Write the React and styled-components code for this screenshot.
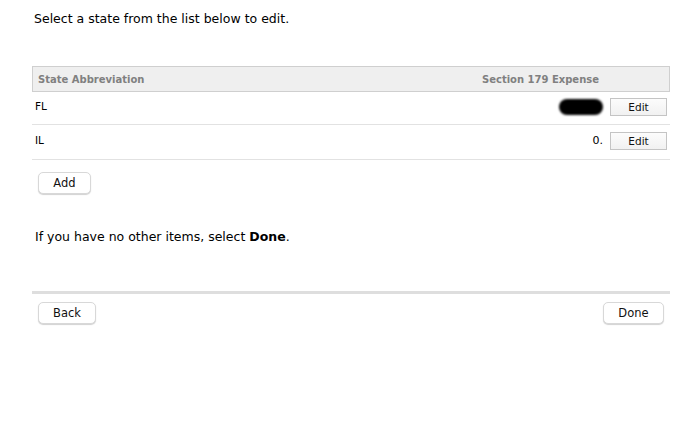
import styled, { createGlobalStyle } from "styled-components"

const Global = createGlobalStyle`
  body {
    margin: 0;
    background: #fff;
    font-family: "DejaVu Sans", "Open Sans", sans-serif;
    color: #000;
  }
`

const rows = [
  { state: "FL", amount: null, height: 33 },
  { state: "IL", amount: "0.", height: 35 },
]

const App = () => {
  return (
    <Page>
      <Global />
      <Intro>Select a state from the list below to edit.</Intro>
      <Table>
        <Header>
          <HeadCell>State Abbreviation</HeadCell>
          <HeadCell right>Section 179 Expense</HeadCell>
        </Header>
        {rows.map((r) => (
          <Row key={r.state} height={r.height}>
            <StateCell>{r.state}</StateCell>
            <AmountCell>
              {r.amount === null ? <Redacted /> : <Amount>{r.amount}</Amount>}
              <EditButton>Edit</EditButton>
            </AmountCell>
          </Row>
        ))}
      </Table>
      <AddWrap>
        <RoundButton width={53}>Add</RoundButton>
      </AddWrap>
      <Note>
        If you have no other items, select <b>Done</b>.
      </Note>
      <Footer>
        <RoundButton width={58}>Back</RoundButton>
        <RoundButton width={61}>Done</RoundButton>
      </Footer>
    </Page>
  )
}

const Page = styled.div`
  width: 693px;
  height: 435px;
  padding: 10px 23px 0 32px;
  box-sizing: border-box;
`

const Intro = styled.p`
  margin: 0 0 0 2px;
  font-size: 12.5px;
  line-height: 18px;
`

const Table = styled.div`
  margin-top: 38px;
  width: 638px;
`

const Header = styled.div`
  height: 26px;
  display: flex;
  align-items: center;
  justify-content: space-between;
  background: #efefef;
  border: 1px solid #cfcfcf;
  box-sizing: border-box;
  padding: 0 70px 0 5px;
`

const HeadCell = styled.span`
  font-size: 10px;
  font-weight: bold;
  color: #808080;
  text-align: ${(p) => (p.right ? "right" : "left")};
`

const Row = styled.div`
  height: ${(p) => p.height}px;
  box-sizing: border-box;
  display: flex;
  align-items: center;
  justify-content: space-between;
  border-bottom: 1px solid #e2e2e2;
  padding: 0 3px;
`

const StateCell = styled.span`
  font-size: 10.5px;
  margin-top: -4px;
`

const AmountCell = styled.div`
  display: flex;
  align-items: center;
  gap: 7px;
  margin-top: -3px;
`

const Amount = styled.span`
  font-size: 11px;
`

const Redacted = styled.span`
  display: block;
  width: 44px;
  height: 16px;
  background: #000;
  border-radius: 9px;
  filter: blur(1px);
`

const EditButton = styled.button`
  width: 57px;
  height: 18px;
  border: 1px solid #c4c4c4;
  background: linear-gradient(#fcfcfc, #f1f1f1);
  font-family: "DejaVu Sans", sans-serif;
  font-size: 10.5px;
  color: #111;
  padding: 0;
`

const AddWrap = styled.div`
  margin: 12px 0 0 6px;
`

const RoundButton = styled.button`
  width: ${(p) => p.width}px;
  height: 22px;
  border: 1px solid #d8d8d8;
  border-radius: 5px;
  background: #fff;
  box-shadow: 0 1px 1px rgba(0, 0, 0, 0.18);
  font-family: "DejaVu Sans", sans-serif;
  font-size: 11.5px;
  color: #111;
  padding: 0;
`

const Note = styled.p`
  margin: 34px 0 0 3px;
  font-size: 12.5px;
  line-height: 18px;
  b {
    font-weight: bold;
  }
`

const Footer = styled.div`
  margin-top: 45px;
  width: 638px;
  border-top: 3px solid #dedede;
  padding: 8px 6px 0 6px;
  box-sizing: border-box;
  display: flex;
  justify-content: space-between;
`

export default App
